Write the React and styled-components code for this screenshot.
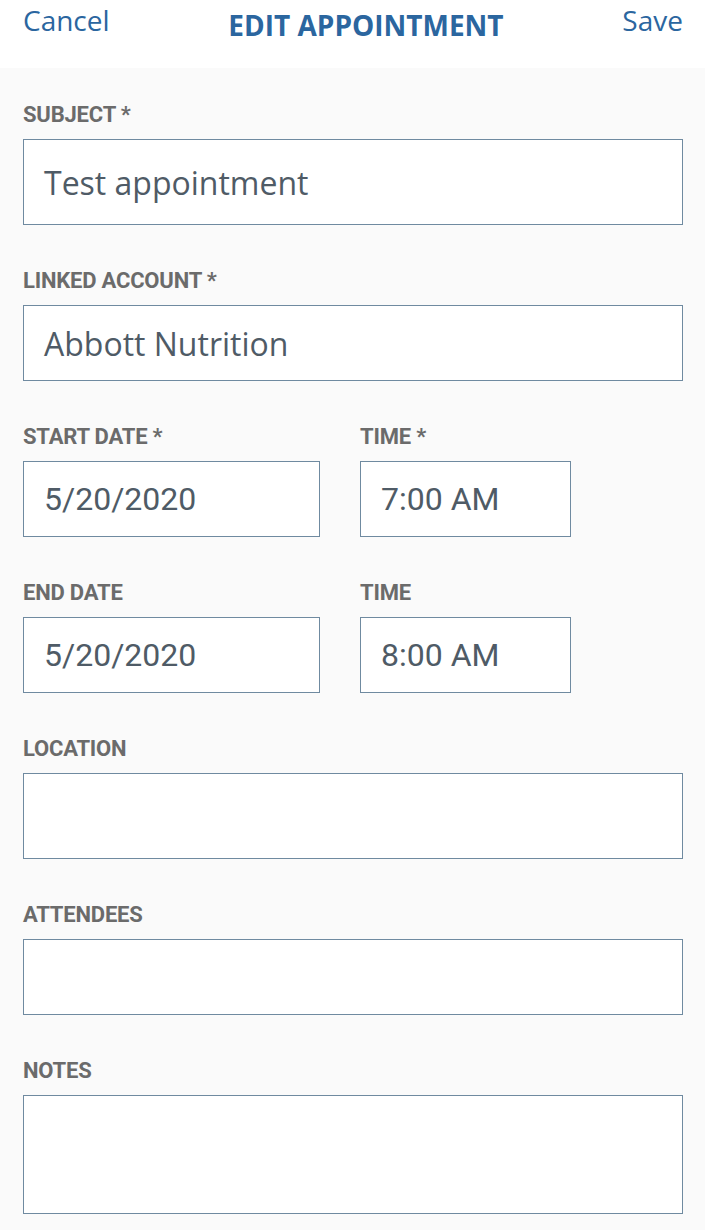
import React from "react";
import styled, { createGlobalStyle } from "styled-components";

const GlobalStyle = createGlobalStyle`
  html, body {
    margin: 0;
    padding: 0;
    background: #fafafa;
  }
  * {
    box-sizing: border-box;
  }
`;

const fields = [
  { label: "SUBJECT *", value: "Test appointment", height: 86 },
  { label: "LINKED ACCOUNT *", value: "Abbott Nutrition", height: 76 },
];

const lowerFields = [
  { label: "LOCATION", value: "", height: 86 },
  { label: "ATTENDEES", value: "", height: 76 },
  { label: "NOTES", value: "", height: 119 },
];

export default function App() {
  return (
    <>
      <GlobalStyle />
      <Page>
        <Header>
          <HeaderLink>Cancel</HeaderLink>
          <Title>EDIT APPOINTMENT</Title>
          <HeaderLink>Save</HeaderLink>
        </Header>
        <Form>
          {fields.map((f) => (
            <Field key={f.label}>
              <Label>{f.label}</Label>
              <Input $height={f.height}>{f.value}</Input>
            </Field>
          ))}
          <Row>
            <Field>
              <Label>START DATE *</Label>
              <Input $height={76} $mono>5/20/2020</Input>
            </Field>
            <Field>
              <Label>TIME *</Label>
              <Input $height={76} $mono>7:00 AM</Input>
            </Field>
          </Row>
          <Row>
            <Field>
              <Label>END DATE</Label>
              <Input $height={76} $mono>5/20/2020</Input>
            </Field>
            <Field>
              <Label>TIME</Label>
              <Input $height={76} $mono>8:00 AM</Input>
            </Field>
          </Row>
          {lowerFields.map((f) => (
            <Field key={f.label}>
              <Label>{f.label}</Label>
              <Input $height={f.height}>{f.value}</Input>
            </Field>
          ))}
        </Form>
      </Page>
    </>
  );
}

const Page = styled.div`
  width: 705px;
  min-height: 1230px;
  background: #fafafa;
`;

const Header = styled.header`
  height: 68px;
  background: #ffffff;
  display: flex;
  justify-content: space-between;
  align-items: flex-start;
  padding: 6px 22px 0 23px;
`;

const HeaderLink = styled.span`
  font-family: "Open Sans", sans-serif;
  font-size: 28px;
  line-height: 28px;
  color: #2b669f;
`;

const Title = styled.h1`
  margin: 5px 0 0;
  font-family: "Open Sans", sans-serif;
  font-weight: 700;
  font-size: 28px;
  line-height: 28px;
  color: #2b669f;
`;

const Form = styled.div`
  display: flex;
  flex-direction: column;
  gap: 45px;
  padding: 36px 22px 0 23px;
`;

const Row = styled.div`
  display: grid;
  grid-template-columns: 297px 211px;
  column-gap: 40px;
`;

const Field = styled.div`
  display: flex;
  flex-direction: column;
`;

const Label = styled.label`
  font-family: Roboto, sans-serif;
  font-weight: 700;
  font-size: 22px;
  line-height: 22px;
  letter-spacing: -0.2px;
  color: #6b6b6b;
  margin-bottom: 13px;
`;

const Input = styled.div`
  height: ${(p) => p.$height}px;
  background: #ffffff;
  border: 1px solid #6f8aa0;
  display: flex;
  align-items: center;
  padding: 0 20px;
  font-family: ${(p) => (p.$mono ? "Roboto" : "\"Open Sans\"")}, sans-serif;
  font-size: 32px;
  color: #4f5b66;
`;
